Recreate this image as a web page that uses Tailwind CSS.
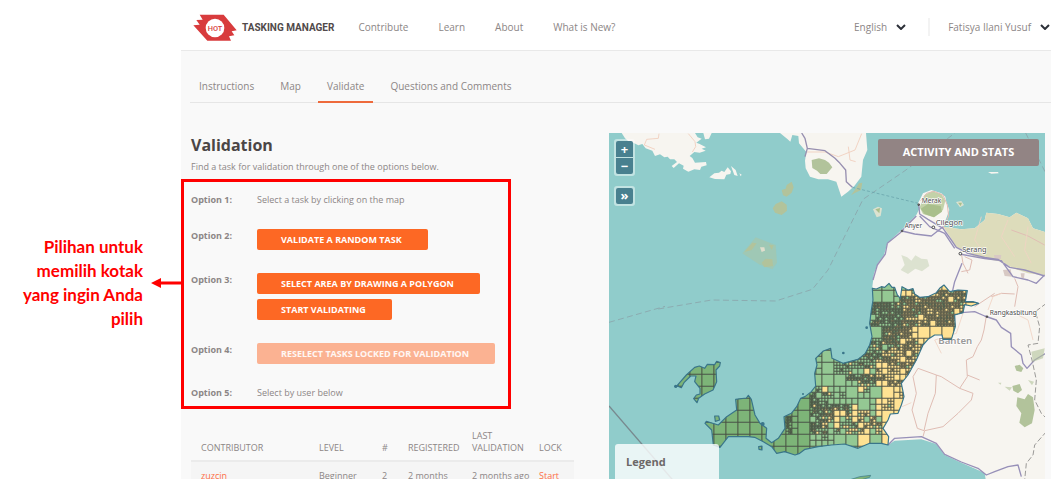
<!DOCTYPE html>
<html lang="id">
<head>
<meta charset="utf-8">
<meta name="viewport" content="width=device-width, initial-scale=1">
<title>Tasking Manager - Validation</title>
<script src="https://cdn.jsdelivr.net/npm/@tailwindcss/browser@4"></script>
</head>
<body class="flex h-screen overflow-hidden bg-white pb-[5px] font-['Open_Sans','Noto_Sans',sans-serif] text-[#8c8686]">

<aside class="flex w-[181px] shrink-0 items-center justify-end gap-2 self-start pt-[235px] text-[#ff0000]">
  <p class="w-[132px] text-right font-['Lato',sans-serif] text-[17px] leading-6 font-bold">Pilihan untuk memilih kotak yang ingin Anda pilih</p>
  <svg class="h-[10px] w-[30px] shrink-0" viewBox="0 0 30 10" fill="currentColor" aria-hidden="true"><path d="M0 5 10 0V3.6H30V6.4H10V10Z"/></svg>
</aside>

<div class="flex min-w-0 flex-1 flex-col overflow-hidden bg-[#f9f9f9]">
  <header class="flex h-[51px] shrink-0 items-center justify-between border-b border-[#e9e9e9] bg-white pt-1 pr-px pl-3 text-[10px]">
    <div class="flex items-center">
      <a href="#" class="flex items-center gap-[5px] text-[#514a4a]">
        <svg class="h-[27px] w-[44px]" viewBox="37 43 132 81" aria-hidden="true">
          <path fill="#d83b3d" d="M57 45H129L168 92 153 95 161 107 145 110 151 123H80L38 77 57 75 47 61 66 60Z"/>
          <circle cx="103" cy="85" r="28" fill="#fff"/>
          <text x="103" y="93" text-anchor="middle" font-family="Roboto" font-size="22" font-weight="500" fill="#d83b3d">HOT</text>
        </svg>
        <span class="font-['Roboto',sans-serif] font-bold">TASKING MANAGER</span>
      </a>
      <nav class="ml-6 flex gap-[30px]">
        <a href="#">Contribute</a><a href="#">Learn</a><a href="#">About</a><a href="#">What is New?</a>
      </nav>
    </div>
    <div class="flex items-center">
      <button class="flex items-center gap-[9px]">English
        <svg class="h-[6px] w-[10px]" viewBox="0 0 10 6" fill="none" stroke="#2c3038" stroke-width="2"><path d="M1 1 5 5 9 1"/></svg>
      </button>
      <span class="mr-[18px] ml-[22px] h-[18px] w-[2px] bg-[#f3f3f3]"></span>
      <button class="flex items-center gap-[9px]">Fatisya Ilani Yusuf
        <svg class="h-[6px] w-[10px]" viewBox="0 0 10 6" fill="none" stroke="#2c3038" stroke-width="2"><path d="M1 1 5 5 9 1"/></svg>
      </button>
    </div>
  </header>

  <nav class="mt-6 ml-[9px] flex shrink-0 gap-2 border-b border-[#e6e6e6] text-[10px] leading-[22px]">
    <a href="#" class="px-[9px] pb-1">Instructions</a>
    <a href="#" class="px-[9px] pb-1">Map</a>
    <a href="#" class="-mb-px border-b-2 border-[#ee6a3c] px-[9px] pb-1">Validate</a>
    <a href="#" class="px-[9px] pb-1">Questions and Comments</a>
  </nav>

  <main class="mt-[30px] mr-[6px] flex min-h-0 flex-1 gap-[35px]">
    <section class="w-[393px] shrink-0 pl-[10px] text-[9px] leading-3">
      <h1 class="text-[16px] leading-6 font-bold text-[#4b4646]">Validation</h1>
      <p class="mt-1">Find a task for validation through one of the options below.</p>

      <dl class="mt-[6px] -ml-[10px] grid w-[330px] grid-cols-[66px_1fr] gap-y-[23px] border-3 border-[#ff0000] pt-3 pb-[7px] pl-[7px]">
        <dt class="font-bold">Option 1:</dt>
        <dd>Select a task by clicking on the map</dd>
        <dt class="pt-px font-bold">Option 2:</dt>
        <dd><button class="block h-[21px] rounded-[2px] bg-[#fd6824] pr-[26px] pl-6 font-bold text-white">VALIDATE A RANDOM TASK</button></dd>
        <dt class="pt-px font-bold">Option 3:</dt>
        <dd class="flex flex-col items-start gap-[5px]">
          <button class="h-[21px] rounded-[2px] bg-[#fd6824] pr-[26px] pl-6 font-bold text-white">SELECT AREA BY DRAWING A POLYGON</button>
          <button class="h-[21px] rounded-[2px] bg-[#fd6824] pr-[26px] pl-6 font-bold text-white">START VALIDATING</button>
        </dd>
        <dt class="pt-px font-bold">Option 4:</dt>
        <dd><button disabled class="block h-[21px] rounded-[2px] bg-[#fbb292] pr-[26px] pl-6 font-bold text-white/90">RESELECT TASKS LOCKED FOR VALIDATION</button></dd>
        <dt class="font-bold">Option 5:</dt>
        <dd>Select by user below</dd>
      </dl>

      <table class="mt-[21px] w-full table-fixed text-left">
        <thead class="border-b-2 border-[#ebebeb] align-bottom">
          <tr>
            <th scope="col" class="w-[118px] pb-[6px] pl-[10px] font-normal">CONTRIBUTOR</th>
            <th scope="col" class="w-[63px] pb-[6px] pl-[10px] font-normal">LEVEL</th>
            <th scope="col" class="w-[26px] pb-[6px] pl-[10px] font-normal">#</th>
            <th scope="col" class="w-[64px] pb-[6px] pl-[10px] font-normal">REGISTERED</th>
            <th scope="col" class="w-[67px] pb-[6px] pl-[10px] font-normal">LAST VALIDATION</th>
            <th scope="col" class="pb-[6px] pl-[10px] font-normal">LOCK</th>
          </tr>
        </thead>
        <tbody class="bg-[#f5f5f5] whitespace-nowrap">
          <tr>
            <td class="py-2 pl-[10px]"><a href="#" class="text-[#fd6f45]">zuzcin</a></td>
            <td class="pl-[10px]">Beginner</td>
            <td class="pl-[10px]">2</td>
            <td class="pl-[10px]">2 months</td>
            <td class="pl-[10px]">2 months ago</td>
            <td class="pl-[10px]"><a href="#" class="text-[#fd6f45]">Start</a></td>
          </tr>
        </tbody>
      </table>
    </section>

    <section class="relative min-w-0 flex-1 overflow-hidden bg-[#90cccb]" aria-label="Map">
      <svg class="block h-full w-full" viewBox="0 0 1308 1038" preserveAspectRatio="xMidYMid slice" font-family="Noto Sans" stroke-linejoin="round">
        <!-- Sumatra and the strait islands -->
        <g transform="translate(-12 -9)">
          <g fill="#f7f5f0">
            <path d="M50 9 60 25 72 35 85 38 100 46 112 42 122 55 142 62 150 78 165 73 178 82 188 80 195 88 208 88 216 96 200 108 206 114 222 100 236 107 234 116 250 125 268 118 285 120 289 110 305 106 303 96 270 98 262 84 254 78 268 66 284 68 302 62 290 56 303 52 284 42 274 38 290 26 278 22 270 9Z"/>
            <path d="M295 9 300 28 312 26 320 9Z"/>
            <path d="M313 142 328 130 342 128 350 122 358 126 368 112 378 124 376 132 364 134 358 148 330 147ZM378 108 392 120 398 138 388 135ZM403 130 410 134 407 139Z"/>
            <path d="M525 9 548 28 556 35 562 15 580 18 582 40 604 66 600 92 602 115 615 140 640 148 669 148 694 155 709 200 729 185 748 168 769 140 774 90 787 60 783 9Z"/>
          </g>
          <g fill="none" stroke="#f0cdbb" stroke-width="2.500"><path d="M162 11 160 25 125 28 118 45 150 58M250 11 270 35 272 50 262 66M606 66 660 66 700 80 750 60 770 11M730 50 735 90 752 95"/></g>
          <path d="M590 9 600 25 607 55 660 62 690 85 705 100 722 120 724 155 742 172M607 55 600 80" fill="none" stroke="#978fb0" stroke-width="4"/>
          <g fill="#b2c39b">
            <path d="M620 90 642 85 660 90 672 98 682 112 665 132 646 132 636 122 622 114Z"/>
            <path d="M530 180 542 176 545 165 560 155 566 172 560 188 545 200 534 196Z"/>
            <path d="M512 222 530 214 545 224 546 242 530 255 510 248 503 235Z"/>
            <path d="M412 370 452 322 512 345 516 398 502 418 462 403Z" opacity=".45"/>
            <path d="M418 366 442 338 455 340 440 360ZM470 398 482 386 502 388 504 408 478 412ZM492 344 506 346 500 360Z"/>
            <path d="M738 196 752 176 762 160 772 158 768 180 748 190Z"/>
          </g>
          <path d="M465 352 478 352 480 362 470 366Z" fill="#e0decd"/>
          <path d="M160 537 320 510 512 513 622 478 669 420 774 208 900 122 1050 9M1262 9 1320 125M12 577 180 529" fill="none" stroke="#8aa5ab" stroke-width="2.500" stroke-dasharray="18 10"/>
          <path d="M742 172 940 220" fill="none" stroke="#6ba6ad" stroke-width="2.500" stroke-dasharray="9 6"/>
          <path d="M12 828 212 1060" stroke="#78898f" stroke-width="4"/>
        </g>

        <!-- Java -->
        <g transform="translate(657 -9)">
          <path fill="#f7f5f0" d="M133 470 138 430 150 400 168 375 178 340 215 305 235 285 265 255 275 235 270 220 285 190 310 180 340 190 352 200 355 215 364 240 355 265 345 290 400 298 440 295 470 270 475 248 510 252 545 262 565 248 600 265 615 295 670 312V1060H475L470 1030 450 1020 400 998 350 975 325 942 280 928 200 932 180 945 150 930 150 800 200 700 180 600Z"/>
          <path fill="#dddcbb" d="M345 290 400 298 440 295 470 270 475 248 510 252 545 262 565 248 600 265 615 295 670 312V438L600 430 555 415 520 395 440 380 385 350 365 318Z"/>
          <path fill="#c3d2a9" d="M275 232 290 195 312 184 340 192 352 212 345 240 318 262 285 252Z"/>
          <path fill="#a9bf8b" d="M278 236 300 222 338 228 342 245 318 262 290 252Z"/>
          <g fill="#dce2d0"><path d="M220 375 238 382 250 392 262 376 280 386 298 388 304 408 282 424 262 416 240 432 218 420 230 405Z"/><path d="M135 238 150 230 162 235 158 258 146 262Z"/><path d="M384 216 400 213 408 225 396 232Z"/></g>
          <path d="M142 238 156 234 154 250ZM390 218 402 218 398 228Z" fill="#a9bf8b"/>
          <path d="M480 126 510 126 512 130 490 131Z" fill="#f7f5f0"/>
          <path fill="#d8c9c4" d="M525 420 548 418 552 440 530 438ZM498 375 520 375 518 388 500 386ZM578 430 590 430 588 445 580 443Z"/>
          <g fill="none" stroke="#e0bdb4" stroke-width="3">
            <path d="M278 212 296 190 318 184 345 195 358 225 362 258 345 295M400 370 405 400 420 430M410 380 432 390 425 420 400 425M550 300 600 318 650 345M560 445 570 470 560 530M490 500 520 490 560 492"/>
            <path d="M475 558 468 600 460 630 448 650 435 680 415 690 418 740 395 775 435 790 430 810 390 850 345 890 290 902 285 920M395 775 340 740 325 735 322 790 300 850 288 902M325 735 270 715 255 740 265 790 252 840 268 895 288 902M418 735 455 750M440 530 500 490"/>
          </g>
          <g fill="none" stroke="#f0d3c3" stroke-width="2.500"><path d="M405 550 385 610 320 630 340 670M222 830 250 818M480 540 495 500 520 490M560 550 600 570 615 630M460 260 440 330 470 370M540 270 520 320 560 380M600 290 590 360 610 400"/></g>
          <g fill="none" stroke="#9790b8" stroke-width="4">
            <path d="M272 222 275 252 300 268 345 295 370 330 385 352 420 370 470 382 510 388 545 412 590 420 650 438M275 258 305 290 350 310 380 355M222 303 260 312 310 318 345 290M178 340 215 310 235 288 265 258M178 340 172 372 148 405 135 450M395 372 470 386 520 392 555 440 600 450 625 460 650 435"/>
            <path d="M402 400 380 455 372 490M400 548 440 545 470 558 505 570 520 592 548 610 550 650 580 675 585 700 597 715 620 690 670 660M180 945 200 925 280 920 325 940 350 973 400 996 450 1015 475 1035 500 1025 540 1010 570 1005 580 1040"/>
          </g>
          <g fill="none" stroke="#9b9a98" stroke-width="3" stroke-dasharray="16 7"><path d="M655 520 622 545 635 590 630 640 600 645 612 690 625 750 620 810 640 850 660 870M655 905 620 945 615 975 595 1000 590 1050"/></g>
          <g fill="#b2c39b"><path d="M560 708 575 704 586 715 580 726 565 722ZM553 768 575 762 582 780 570 790 556 782ZM568 802 590 808 600 792 615 802 620 840 612 880 590 892 574 878 580 850 565 828Z"/><path opacity=".6" d="M610 665 650 655 645 685 615 695ZM510 758 520 758 518 764ZM530 770 552 772 545 782ZM600 750 618 755 612 766Z"/></g>
          <g fill="#fff" stroke="#444" stroke-width="3"><circle cx="316" cy="292" r="4"/><circle cx="397" cy="371" r="4"/><path d="M270 222h4v4h-4zM220 301h4v4h-4zM475 558h4v4h-4z"/></g>
          <g fill="#4c4c4c" stroke="#fff" stroke-width="4" paint-order="stroke">
            <text x="281" y="218" font-size="20">Merak</text>
            <text x="230" y="295" font-size="19">Anyer</text>
            <text x="323" y="286" font-size="23">Cilegon</text>
            <text x="403" y="365" font-size="22">Serang</text>
            <text x="485" y="554" font-size="20">Rangkasbitung</text>
            <text x="331" y="642" font-size="29" font-weight="600" fill="#9b9a9a">Banten</text>
          </g>
        </g>

        <!-- Project area, split into task squares -->
        <defs><clipPath id="area">
          <path id="coast" d="M133 25 145 27 160 20 170 22 183 10 192 22 200 22 208 45 217 55 222 20 240 30 255 26 260 42 275 52 300 50 325 38 335 25 348 15 365 35 390 30 418 32 412 65 435 65 452 70 430 78 410 74 405 98 380 105 382 140 370 178 345 178 342 165 320 165 300 178 285 195 265 240 240 285 220 310 228 350 220 375 210 400 187 402 180 420 165 445 182 470 180 495 160 490 125 490 90 505 50 492 10 495-30 500-69 508-85 520-99 525-130 515-154 520-169 500-194 485-220 472-239 470-299 470-324 502-344 495-349 450-369 430-365 424-329 435-304 410-274 390-277 358-245 354-239 346-230 358-219 405-204 430-184 445-186 475-169 488-149 475-129 445-132 410-110 400-94 380-82 355-69 350-50 335-37 318-40 280-33 255-37 235-14 213 8 205 12 235 45 250 90 238 112 220 125 195 132 170 125 130 130 90 135 60Z
          M-456 321-445 308-425 285-400 262-386 258-370 265-362 253-340 254-334 244-323 248-325 258-336 270-334 305-345 330-370 342-388 355-393 368-403 356-395 345-384 342-384 325-400 305-396 288-412 288-432 308-440 323-452 318Z M-340 408-328 408-325 420-338 424Z M-208 500-198 498-198 510-207 508Z"/>
        </clipPath></defs>
        <g transform="translate(657 441)">
          <g clip-path="url(#area)"><g id="tasks" stroke="#454a40" stroke-opacity=".85"></g></g>
          <use href="#coast" fill="none" stroke="#39758a" stroke-width="3.500"/>
          <g fill="#39758a"><circle cx="116" cy="143" r="4"/><circle cx="46" cy="219" r="4"/><circle cx="-75" cy="342" r="3"/><circle cx="-196" cy="432" r="6"/><circle cx="-457" cy="319" r="5"/></g>
          <path d="M70 598 95 590 128 586 125 592 98 600Z" fill="#7fb37b" stroke="#39758a" stroke-width="2"/>
        </g>
      </svg>

      <div class="absolute top-[6px] left-[5px] flex flex-col gap-[10px] text-[13px] leading-none font-bold text-white">
        <div class="flex flex-col gap-px rounded-[3px] bg-white/45 p-[2px]">
          <button class="h-4 w-[17px] rounded-t-[2px] bg-[#48808f]" aria-label="Zoom in">+</button>
          <button class="h-4 w-[17px] rounded-b-[2px] bg-[#48808f]" aria-label="Zoom out">−</button>
        </div>
        <div class="flex rounded-[3px] bg-white/45 p-[2px]">
          <button class="h-4 w-[17px] rounded-[2px] bg-[#48808f] pb-[2px]" aria-label="Overview">»</button>
        </div>
      </div>
      <button class="absolute top-[6px] right-[6px] h-[27px] w-[161px] rounded-[2px] bg-[#928484] text-[11px] font-bold text-white">ACTIVITY AND STATS</button>
      <div class="absolute bottom-0 left-[6px] h-[35px] w-[104px] rounded-t-[3px] bg-white/80 px-[11px] pt-[10px] text-[11px] leading-4 font-bold text-[#6c6868]">Legend</div>
    </section>
  </main>
</div>

<script>
  const layer = document.getElementById('tasks');
  let seed = 7;
  function rnd() {
    seed = (seed + 0x6d2b79f5) | 0;
    let t = Math.imul(seed ^ (seed >>> 15), 1 | seed);
    t = (t + Math.imul(t ^ (t >>> 7), 61 | t)) ^ t;
    return ((t ^ (t >>> 14)) >>> 0) / 4294967296;
  }
  // Dense spots: [centre x, centre y, radius x, radius y, density]
  const spots = [
    [370,80,55,75,.97],[190,115,75,75,.97],[290,95,80,55,.88],[240,180,60,40,.72],[180,205,80,40,.8],
    [230,230,60,50,.78],[20,390,65,18,.9],[115,295,60,18,.92],[150,240,90,40,.68],[205,312,30,16,.85],
    [145,420,30,20,.7],[-30,375,28,60,.72],[-20,440,40,45,.75],[-115,435,14,40,.8],[100,425,25,25,.75],
    [90,260,60,40,.6],[50,415,80,50,.55]
  ];
  function density(x, y) {
    if (y > 135 && y < 185 && x > 260 || x > 130 && y < 175 && x < 162 && y > 145) return .05;
    if (x < -135 || (y < 60 && x < 210)) return 0;
    if (y > 460) return .05;
    let c = x < -40 ? .1 : .3;
    for (const [a, b, r, s, p] of spots) if (((x - a) / r) ** 2 + ((y - b) / s) ** 2 < 1) c = Math.max(c, p);
    return c;
  }
  function colour(x, y) {
    if (x < -45) return '#7db478';
    let yellow;
    if (y < 150) yellow = x < 225 ? .12 : .78;
    else if (y < 240) yellow = x > 215 ? .93 : x > 165 ? .55 : .15;
    else if (y < 380) yellow = x > 145 ? .9 : x > 60 ? .2 : .08;
    else if (y < 462) yellow = x > 95 ? .88 : x > -15 ? .5 : .1;
    else yellow = x > 88 ? .9 : 0;
    return rnd() < yellow ? '#ffe293' : '#94c893';
  }
  function cell(x, y, s, d) {
    const cx = x + s / 2, cy = y + s / 2, p = density(cx, cy);
    const odds = [Math.min(1, p * 1.5), p, p * p * .8, 0][d];
    if (rnd() < odds) {
      for (const [i, j] of [[0,0],[1,0],[0,1],[1,1]]) cell(x + i * s / 2, y + j * s / 2, s / 2, d + 1);
      return;
    }
    const r = document.createElementNS('http://www.w3.org/2000/svg', 'rect');
    r.setAttribute('x', x); r.setAttribute('y', y);
    r.setAttribute('width', s); r.setAttribute('height', s);
    r.setAttribute('fill', colour(cx, cy));
    r.setAttribute('stroke-width', [2.6, 2.6, 2.5, 2.4][d]);
    layer.append(r);
  }
  for (let y = -5; y < 540; y += 36) for (let x = -486; x < 470; x += 36) cell(x, y, 36, 0);
</script>
</body>
</html>
